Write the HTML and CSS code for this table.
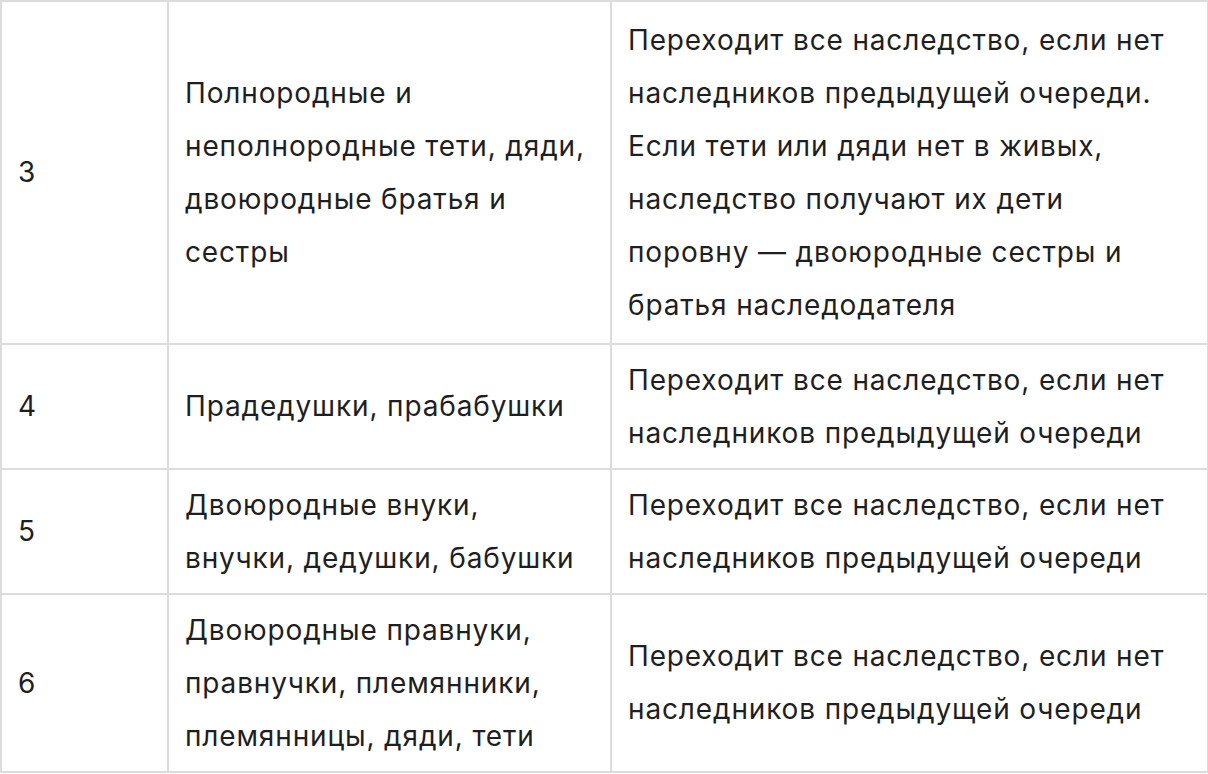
FILE: index.html
```html
<!DOCTYPE html>
<html lang="ru">
<head>
<meta charset="utf-8">
<link rel="stylesheet" href="styles.css">
</head>
<body>
<table class="heirs">
  <colgroup>
    <col class="c-order">
    <col class="c-who">
    <col class="c-what">
  </colgroup>
  <tbody>
    <tr class="row-tall">
      <td>3</td>
      <td>Полнородные и неполнородные тети, дяди, двоюродные братья и сестры</td>
      <td>Переходит все наследство, если нет наследников предыдущей очереди. Если тети или дяди нет в живых, наследство получают их дети поровну — двоюродные сестры и братья наследодателя</td>
    </tr>
    <tr>
      <td>4</td>
      <td>Прадедушки, прабабушки</td>
      <td>Переходит все наследство, если нет наследников предыдущей очереди</td>
    </tr>
    <tr>
      <td>5</td>
      <td>Двоюродные внуки, внучки, дедушки, бабушки</td>
      <td>Переходит все наследство, если нет наследников предыдущей очереди</td>
    </tr>
    <tr>
      <td>6</td>
      <td>Двоюродные правнуки, правнучки, племянники, племянницы, дяди, тети</td>
      <td>Переходит все наследство, если нет наследников предыдущей очереди</td>
    </tr>
  </tbody>
</table>
</body>
</html>
```

FILE: styles.css
```css
html, body {
  margin: 0;
  padding: 0;
  background: #ffffff;
}

.heirs {
  border-collapse: collapse;
  table-layout: fixed;
  width: 1207px;
  font-family: Inter, "Noto Sans", "Liberation Sans", sans-serif;
  font-size: 28px;
  letter-spacing: 0.85px;
  line-height: 53px;
  color: #1f1f1f;
}

.c-order { width: 167px; }
.c-who { width: 443px; }
.c-what { width: 597px; }

.heirs td {
  border: 2px solid #dcdcdc;
  padding: 8.5px 16px;
  vertical-align: middle;
}

.heirs .row-tall td {
  padding-top: 11.5px;
  padding-bottom: 11.5px;
}
```
